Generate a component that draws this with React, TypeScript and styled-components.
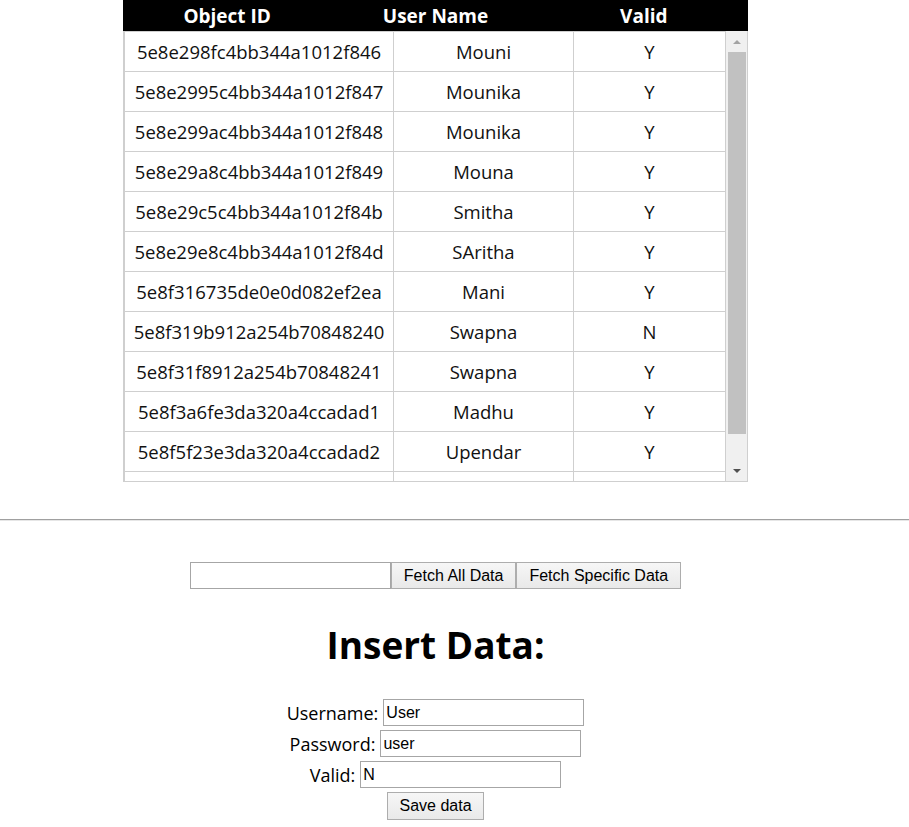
import React from "react";
import styled, { createGlobalStyle } from "styled-components";

const GlobalStyle = createGlobalStyle`
  html, body { margin: 0; padding: 0; background: #fff; }
  body { font-family: "Open Sans", "Noto Sans", sans-serif; color: #000; }
`;

const Column = styled.div`
  width: 871px;
  display: flex;
  flex-direction: column;
  align-items: center;
`;

const TableBlock = styled.div`
  width: 625px;
`;

const HeaderBar = styled.div`
  display: grid;
  grid-template-columns: 1fr 1fr 1fr;
  height: 31px;
  background: #000;
  color: #fff;
  font-weight: 700;
  font-size: 19px;
`;

const HeaderCell = styled.div`
  display: flex;
  align-items: center;
  justify-content: center;
`;

const ScrollBox = styled.div`
  height: 450px;
  display: flex;
  border: 1px solid #cfcfcf;
  border-top: none;
`;

const Viewport = styled.div`
  flex: 1;
  min-width: 0;
  overflow: hidden;
`;

const ScrollTrack = styled.div`
  width: 21px;
  flex: none;
  display: flex;
  flex-direction: column;
  background: #f0f0f0;
`;

const ArrowButton = styled.div<{ $dir: "up" | "down" }>`
  height: 20px;
  flex: none;
  display: flex;
  justify-content: center;
  align-items: center;
  padding-left: 1px;
  &::before {
    content: "";
    width: 0;
    height: 0;
    border-left: 4px solid transparent;
    border-right: 4px solid transparent;
    ${(p) =>
      p.$dir === "up"
        ? "border-bottom: 4px solid #a3a3a3; margin-top: 1px;"
        : "border-top: 4px solid #505050; margin-top: -1px;"}
  }
`;

const ThumbArea = styled.div`
  flex: 1;
  display: flex;
  flex-direction: column;
`;

const Thumb = styled.div`
  margin: 1px 1px 0 2px;
  background: #c1c1c1;
`;

const DataTable = styled.table`
  width: 100%;
  border-collapse: separate;
  border-spacing: 0;
  border-top: 1px solid #cfcfcf;
  table-layout: fixed;
`;

const Cell = styled.td<{ $w?: number }>`
  ${(p) => (p.$w ? `width: ${p.$w}px;` : "")}
  height: 39px;
  padding: 0;
  text-align: center;
  font-size: 18.5px;
  color: #111;
  border-right: 1px solid #cfcfcf;
  border-bottom: 1px solid #cfcfcf;
  white-space: nowrap;
  overflow: hidden;
  &:first-child {
    border-left: 1px solid #cfcfcf;
  }
`;

const Rule = styled.hr`
  margin: 37px 0 0;
  height: 0;
  border: none;
  border-top: 1px solid #a0a0a0;
  border-bottom: 1px solid #e6e6e6;
`;

const Controls = styled.div`
  margin-top: 41px;
  display: flex;
  align-items: stretch;
  height: 27px;
`;

const TextInput = styled.input<{ $w?: number }>`
  box-sizing: border-box;
  width: ${(p) => p.$w ?? 201}px;
  height: 27px;
  margin: 0;
  padding: 1px 2px;
  border: 1px solid #a6a6a6;
  font-family: "Liberation Sans", Arial, sans-serif;
  font-size: 16px;
  color: #000;
  background: #fff;
  outline: none;
`;

const Button = styled.button<{ $px?: number }>`
  box-sizing: border-box;
  height: 27px;
  margin: 0;
  padding: 0 ${(p) => p.$px ?? 12}px;
  border: 1px solid #adadad;
  background: linear-gradient(#f6f6f6, #e9e9e9);
  font-family: "Liberation Sans", Arial, sans-serif;
  font-size: 16px;
  color: #000;
  cursor: pointer;
`;

const SaveButton = styled(Button)`
  height: 28px;
`;

const Title = styled.h1`
  margin: 33px 0 0;
  font-size: 37px;
  line-height: 46px;
  font-weight: 700;
`;

const Form = styled.div`
  margin-top: 29px;
  display: flex;
  flex-direction: column;
  align-items: center;
`;

const FormRow = styled.div`
  height: 31px;
  display: flex;
  align-items: center;
  gap: 5px;
  font-size: 18px;
`;

const Label = styled.label`
  font-size: 18px;
`;

type Row = { id: string; name: string; valid: string };

const rows: Row[] = [
  { id: "5e8e298fc4bb344a1012f846", name: "Mouni", valid: "Y" },
  { id: "5e8e2995c4bb344a1012f847", name: "Mounika", valid: "Y" },
  { id: "5e8e299ac4bb344a1012f848", name: "Mounika", valid: "Y" },
  { id: "5e8e29a8c4bb344a1012f849", name: "Mouna", valid: "Y" },
  { id: "5e8e29c5c4bb344a1012f84b", name: "Smitha", valid: "Y" },
  { id: "5e8e29e8c4bb344a1012f84d", name: "SAritha", valid: "Y" },
  { id: "5e8f316735de0e0d082ef2ea", name: "Mani", valid: "Y" },
  { id: "5e8f319b912a254b70848240", name: "Swapna", valid: "N" },
  { id: "5e8f31f8912a254b70848241", name: "Swapna", valid: "Y" },
  { id: "5e8f3a6fe3da320a4ccadad1", name: "Madhu", valid: "Y" },
  { id: "5e8f5f23e3da320a4ccadad2", name: "Upendar", valid: "Y" },
  { id: "", name: "", valid: "" },
];

const VIEW_H = 450;
const ROW_H = 40;
const TRACK_H = VIEW_H - 40;
const contentH = rows.length * ROW_H + 1;
const thumbH = Math.round((TRACK_H * VIEW_H) / contentH) - 2;

export default function App() {
  return (
    <>
      <GlobalStyle />
      <Column>
        <TableBlock>
          <HeaderBar>
            <HeaderCell>Object ID</HeaderCell>
            <HeaderCell>User Name</HeaderCell>
            <HeaderCell>Valid</HeaderCell>
          </HeaderBar>
          <ScrollBox>
            <Viewport>
              <DataTable>
                <tbody>
                  {rows.map((r, i) => (
                    <tr key={i}>
                      <Cell $w={268}>{r.id}</Cell>
                      <Cell $w={179}>{r.name}</Cell>
                      <Cell>{r.valid}</Cell>
                    </tr>
                  ))}
                </tbody>
              </DataTable>
            </Viewport>
            <ScrollTrack>
              <ArrowButton $dir="up" />
              <ThumbArea>
                <Thumb style={{ height: thumbH }} />
              </ThumbArea>
              <ArrowButton $dir="down" />
            </ScrollTrack>
          </ScrollBox>
        </TableBlock>
      </Column>
      <Rule />
      <Column>
        <Controls>
          <TextInput type="text" $w={201} defaultValue="" />
          <Button>Fetch All Data</Button>
          <Button>Fetch Specific Data</Button>
        </Controls>
        <Title>Insert Data:</Title>
        <Form>
          <FormRow>
            <Label>Username:</Label>
            <TextInput type="text" defaultValue="User" />
          </FormRow>
          <FormRow>
            <Label>Password:</Label>
            <TextInput type="text" defaultValue="user" />
          </FormRow>
          <FormRow>
            <Label>Valid:</Label>
            <TextInput type="text" defaultValue="N" />
          </FormRow>
          <FormRow>
            <SaveButton $px={11}>Save data</SaveButton>
          </FormRow>
        </Form>
      </Column>
    </>
  );
}
